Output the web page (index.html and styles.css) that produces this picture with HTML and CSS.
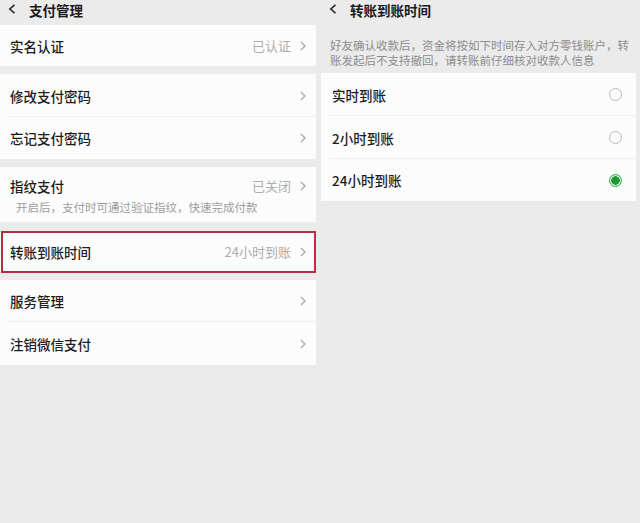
FILE: index.html
```html
<!DOCTYPE html>
<html lang="zh-CN">
<head>
<meta charset="utf-8">
<title>支付管理</title>
<link rel="stylesheet" href="styles.css">
</head>
<body>
<div class="screens">
  <section class="screen screen-left">
    <header class="bar">
      <svg class="back" width="8" height="10" viewBox="0 0 8 10"><path d="M6.5 0.8 L1.8 5 L6.5 9.2" fill="none" stroke="#2a2a2a" stroke-width="1.6"/></svg>
      <span class="bar-title">支付管理</span>
    </header>

    <div class="group g1">
      <div class="row h41">
        <span class="label">实名认证</span>
        <span class="value">已认证</span>
        <svg class="chev" width="6" height="10" viewBox="0 0 6 10"><path d="M1 1 L5 5 L1 9" fill="none" stroke="#aaaaaa" stroke-width="1.3"/></svg>
      </div>
    </div>

    <div class="group g2">
      <div class="row h43 divided">
        <span class="label">修改支付密码</span>
        <svg class="chev" width="6" height="10" viewBox="0 0 6 10"><path d="M1 1 L5 5 L1 9" fill="none" stroke="#aaaaaa" stroke-width="1.3"/></svg>
      </div>
      <div class="row h42">
        <span class="label">忘记支付密码</span>
        <svg class="chev" width="6" height="10" viewBox="0 0 6 10"><path d="M1 1 L5 5 L1 9" fill="none" stroke="#aaaaaa" stroke-width="1.3"/></svg>
      </div>
    </div>

    <div class="group g3">
      <div class="row-tall">
        <div class="row-main">
          <span class="label">指纹支付</span>
          <span class="value">已关闭</span>
          <svg class="chev" width="6" height="10" viewBox="0 0 6 10"><path d="M1 1 L5 5 L1 9" fill="none" stroke="#aaaaaa" stroke-width="1.3"/></svg>
        </div>
        <div class="note">开启后，支付时可通过验证指纹，快速完成付款</div>
      </div>
    </div>

    <div class="group g4">
      <div class="row h40 marked">
        <span class="label">转账到账时间</span>
        <span class="value">24小时到账</span>
        <svg class="chev" width="6" height="10" viewBox="0 0 6 10"><path d="M1 1 L5 5 L1 9" fill="none" stroke="#aaaaaa" stroke-width="1.3"/></svg>
      </div>
    </div>

    <div class="group g5">
      <div class="row h42 divided">
        <span class="label">服务管理</span>
        <svg class="chev" width="6" height="10" viewBox="0 0 6 10"><path d="M1 1 L5 5 L1 9" fill="none" stroke="#aaaaaa" stroke-width="1.3"/></svg>
      </div>
      <div class="row h43">
        <span class="label">注销微信支付</span>
        <svg class="chev" width="6" height="10" viewBox="0 0 6 10"><path d="M1 1 L5 5 L1 9" fill="none" stroke="#aaaaaa" stroke-width="1.3"/></svg>
      </div>
    </div>
  </section>

  <section class="screen screen-right">
    <header class="bar">
      <svg class="back" width="8" height="10" viewBox="0 0 8 10"><path d="M6.5 0.8 L1.8 5 L6.5 9.2" fill="none" stroke="#2a2a2a" stroke-width="1.6"/></svg>
      <span class="bar-title">转账到账时间</span>
    </header>

    <p class="desc">好友确认收款后，资金将按如下时间存入对方零钱账户，转<br>账发起后不支持撤回，请转账前仔细核对收款人信息</p>

    <div class="group options">
      <div class="row h43 divided">
        <span class="label">实时到账</span>
        <span class="radio"></span>
      </div>
      <div class="row h43 divided">
        <span class="label">2小时到账</span>
        <span class="radio"></span>
      </div>
      <div class="row h42">
        <span class="label">24小时到账</span>
        <span class="radio checked"></span>
      </div>
    </div>
  </section>
</div>
</body>
</html>
```

FILE: styles.css
```css
* {
  box-sizing: border-box;
}

html, body {
  margin: 0;
  padding: 0;
}

body {
  width: 640px;
  height: 523px;
  background: #ebebec;
  font-family: "Noto Sans CJK SC", "Noto Sans", sans-serif;
  color: #1c1c1c;
  overflow: hidden;
}

.screens {
  display: grid;
  grid-template-columns: 320px 320px;
}

.screen-left {
  padding-right: 4px;
}

.screen-right {
  padding-left: 1px;
  padding-right: 4px;
}

.bar {
  height: 25px;
  display: flex;
  align-items: flex-start;
}

.back {
  margin: 4px 0 0 8px;
  flex: none;
}

.bar-title {
  margin-left: 13px;
  font-size: 13.5px;
  font-weight: 700;
  line-height: 20px;
  color: #1a1a1a;
}

.group {
  background: #fcfcfc;
}

.g2, .g3, .g5 {
  margin-top: 8px;
}

.g4 {
  margin-top: 10px;
}

.row {
  position: relative;
  display: flex;
  align-items: center;
  padding: 0 10px 0 10px;
}

.h40 { height: 40px; }
.h41 { height: 41px; }
.h42 { height: 42px; }
.h43 { height: 43px; }

.divided::after {
  content: "";
  position: absolute;
  left: 8px;
  right: 0;
  bottom: 0;
  height: 1px;
  background: #efefef;
}

.label {
  font-size: 13.5px;
  font-weight: 500;
  line-height: 18px;
  color: #1c1c1c;
  flex: 1;
}

.value {
  font-size: 13px;
  line-height: 18px;
  color: #adadad;
  margin-right: 9px;
}

.chev {
  flex: none;
}

.row-tall {
  height: 55px;
  padding: 10px 10px 0 10px;
}

.row-main {
  display: flex;
  align-items: center;
  height: 18px;
}

.note {
  margin-top: 4px;
  padding-left: 6px;
  font-size: 11.5px;
  line-height: 16px;
  color: #9c9c9c;
}

.marked {
  outline: 2px solid #b3303c;
  outline-offset: -1px;
  margin: 0 1px 0 2px;
  padding-left: 8px;
  padding-right: 9px;
}

.desc {
  margin: 13px 0 0 0;
  padding: 0 4px 0 9px;
  height: 35px;
  font-size: 11.5px;
  line-height: 15px;
  color: #8d8d8d;
  white-space: nowrap;
}

.options .row {
  padding-left: 11px;
  padding-right: 14px;
}

.radio {
  flex: none;
  width: 13px;
  height: 13px;
  border-radius: 50%;
  border: 1px solid #b9b9b9;
  background: #fbfbfb;
}

.radio.checked {
  border: 1px solid #2fa846;
  background: radial-gradient(circle, #1f9a33 0, #1f9a33 4px, #d9f0dc 4.5px, #d9f0dc 100%);
}
```
